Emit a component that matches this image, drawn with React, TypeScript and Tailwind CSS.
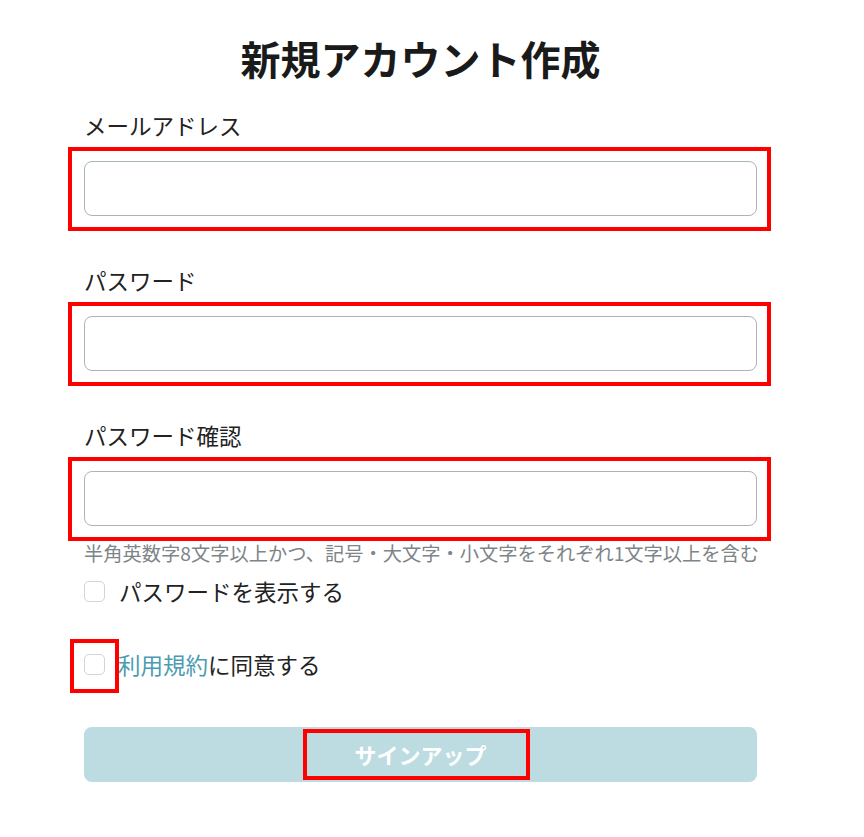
import { useState } from 'react';

const fontStack = "font-['Noto_Sans_CJK_JP','Noto_Sans',sans-serif]";

function Annotation({ className }: { className: string }) {
  return <div className={`pointer-events-none absolute border-4 border-[#ff0000] ${className}`} />;
}

interface FieldProps {
  label: string;
  type: string;
  value: string;
  onChange: (v: string) => void;
  gapTop: string;
}

function Field({ label, type, value, onChange, gapTop }: FieldProps) {
  return (
    <div className={gapTop}>
      <label className="block text-[22.5px] leading-[33px] text-[#222222] mb-[19px]">{label}</label>
      <div className="relative">
        <input
          type={type}
          value={value}
          onChange={(e) => onChange(e.target.value)}
          className="block w-full h-[55px] rounded-lg border-[1.5px] border-[#a9b5b8] bg-white px-4 text-[20px] outline-none"
        />
        <Annotation className="-left-[16px] -right-[14px] -top-[14px] -bottom-[15px]" />
      </div>
    </div>
  );
}

export default function App() {
  const [email, setEmail] = useState('');
  const [password, setPassword] = useState('');
  const [confirm, setConfirm] = useState('');
  const [showPassword, setShowPassword] = useState(false);
  const [agreed, setAgreed] = useState(false);

  const pwType = showPassword ? 'text' : 'password';

  return (
    <div className={`min-h-[837px] bg-white ${fontStack}`}>
      <div className="ml-[84px] w-[673px] pt-[30px]">
        <h1 className="text-center text-[40px] leading-[56px] font-bold text-[#1a1a1a]">新規アカウント作成</h1>

        <Field label="メールアドレス" type="email" value={email} onChange={setEmail} gapTop="mt-[23px]" />
        <Field label="パスワード" type={pwType} value={password} onChange={setPassword} gapTop="mt-[48px]" />
        <Field label="パスワード確認" type={pwType} value={confirm} onChange={setConfirm} gapTop="mt-[48px]" />

        <p className="mt-[13px] text-[19.25px] leading-[28px] text-[#7d8589] whitespace-nowrap">
          半角英数字8文字以上かつ、記号・大文字・小文字をそれぞれ1文字以上を含む
        </p>

        <label className="mt-[8px] flex h-[33px] items-center gap-[14px] text-[22.5px] text-[#222222]">
          <input
            type="checkbox"
            checked={showPassword}
            onChange={(e) => setShowPassword(e.target.checked)}
            className="h-[21px] w-[21px] appearance-none rounded-[5px] border-[1.5px] border-[#d0d5d7] bg-white"
          />
          パスワードを表示する
        </label>

        <div className="mt-[40px] flex h-[33px] items-center gap-[13px] text-[22.5px] text-[#222222]">
          <div className="relative flex">
            <input
              type="checkbox"
              checked={agreed}
              onChange={(e) => setAgreed(e.target.checked)}
              className="h-[21px] w-[21px] appearance-none rounded-[5px] border-[1.5px] border-[#d0d5d7] bg-white"
            />
            <Annotation className="-left-[14px] -right-[14px] -top-[15px] -bottom-[18px]" />
          </div>
          <span>
            <a href="#" className="text-[#4a9cb2]">利用規約</a>に同意する
          </span>
        </div>

        <button
          type="button"
          disabled={!agreed}
          className="relative mt-[46px] flex h-[55px] w-full items-center justify-center rounded-lg bg-[#bcdce2] text-[22px] font-semibold text-white"
        >
          サインアップ
          <Annotation className="left-[219px] top-[2px] w-[227px] h-[51px]" />
        </button>
      </div>
    </div>
  );
}
